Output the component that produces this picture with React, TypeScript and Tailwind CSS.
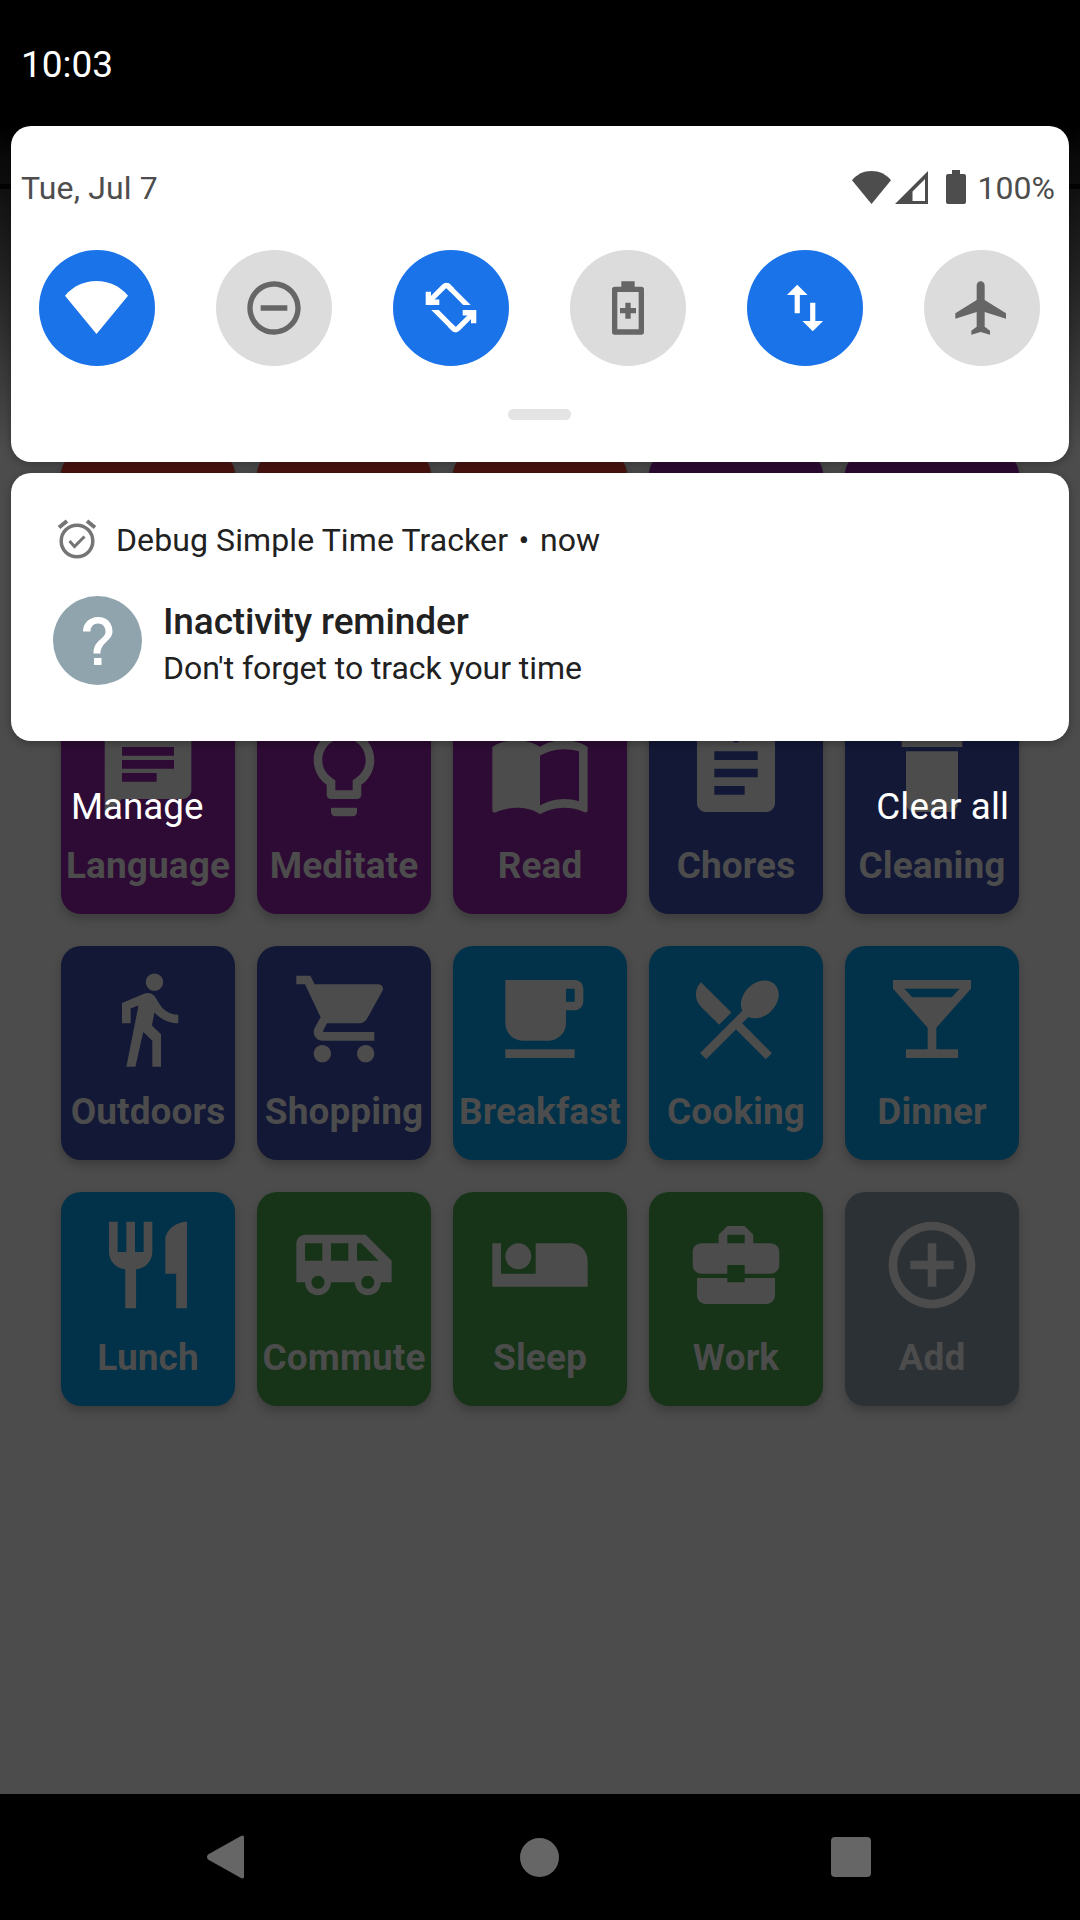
import React from "react";
import type { IconType } from "react-icons";
import {
  MdAddCircleOutline, MdAirlineSeatIndividualSuite, MdAirportShuttle, MdAssignment, MdBusinessCenter,
  MdChat, MdDelete, MdDirectionsWalk, MdFlight, MdFreeBreakfast, MdImportContacts, MdLightbulbOutline,
  MdLocalBar, MdRemoveCircleOutline, MdRestaurant, MdRestaurantMenu, MdShoppingCart, MdSwapVert,
} from "react-icons/md";

type Tile = { label: string; color: string; Icon?: IconType };

const red = "bg-[#491410]";
const purple = "bg-[#2e0b34]";
const indigo = "bg-[#131836]";
const blue = "bg-[#013249]";
const green = "bg-[#173418]";

const tiles: Tile[] = [
  { label: "", color: red }, { label: "", color: red }, { label: "", color: red },
  { label: "", color: purple }, { label: "", color: purple },
  { label: "Language", color: purple, Icon: MdChat },
  { label: "Meditate", color: purple, Icon: MdLightbulbOutline },
  { label: "Read", color: purple, Icon: MdImportContacts },
  { label: "Chores", color: indigo, Icon: MdAssignment },
  { label: "Cleaning", color: indigo, Icon: MdDelete },
  { label: "Outdoors", color: indigo, Icon: MdDirectionsWalk },
  { label: "Shopping", color: indigo, Icon: MdShoppingCart },
  { label: "Breakfast", color: blue, Icon: MdFreeBreakfast },
  { label: "Cooking", color: blue, Icon: MdRestaurantMenu },
  { label: "Dinner", color: blue, Icon: MdLocalBar },
  { label: "Lunch", color: blue, Icon: MdRestaurant },
  { label: "Commute", color: green, Icon: MdAirportShuttle },
  { label: "Sleep", color: green, Icon: MdAirlineSeatIndividualSuite },
  { label: "Work", color: green, Icon: MdBusinessCenter },
  { label: "Add", color: "bg-[#2c3135]", Icon: MdAddCircleOutline },
];

function ActivityTile({ label, color, Icon }: Tile) {
  return (
    <div className={`flex h-[214px] flex-col items-center rounded-[20px] pt-[20.500px] shadow-[0_5px_10px_rgba(0,0,0,0.22)] ${color}`}>
      <div className="h-[105px]">{Icon && <Icon size={104} />}</div>
      <span className="mt-[18.500px] whitespace-nowrap text-[37px] leading-[43px] font-bold tracking-[0.1px]">{label}</span>
    </div>
  );
}

function WifiFull({ className }: { className: string }) {
  return (
    <svg viewBox="0 0 63 53" preserveAspectRatio="none" className={className} fill="currentColor">
      <path d="M0 14.7C8 5.200 19 0 31.500 0S55 5.200 63 14.700L31.500 53z" />
    </svg>
  );
}

function RotateIcon() {
  return (
    <svg viewBox="0 0 64 64" className="size-16" fill="currentColor">
      <path d="M9.500 26L24.900 10.600Q27.300 8.200 29.700 10.600L33 13.900" fill="none" stroke="currentColor" strokeWidth="5.300" />
      <path d="M29.700 6.900L51.700 29H44.200L25.900 10.600z" />
      <path d="M6.700 15.700H12V23.500H20.300V29H6.700z" />
      <path d="M54.500 37L39.100 52.400Q36.700 54.800 34.300 52.400L31 49.100" fill="none" stroke="currentColor" strokeWidth="5.300" />
      <path d="M34.300 56.100L12.300 34H19.800L38.100 52.400z" />
      <path d="M57.300 47.300H52V39.500H43.700V34H57.300z" />
    </svg>
  );
}

function BatterySaverIcon() {
  return (
    <svg viewBox="0 0 24 24" className="size-16" fill="currentColor" fillRule="evenodd">
      <path d="M17 4h-2.500V2h-5v2H7a1 1 0 0 0-1 1v16a1 1 0 0 0 1 1h10a1 1 0 0 0 1-1V5a1 1 0 0 0-1-1zm-1 16H8V6h8zM11 10h2v2h2v2h-2v2h-2v-2H9v-2h2z" />
    </svg>
  );
}

function Toggle({ on = false, children }: { on?: boolean; children: React.ReactNode }) {
  return (
    <div className={`flex size-[116px] items-center justify-center rounded-full pb-px ${on ? "bg-[#1a73e8] text-white" : "bg-[#dcdcdc] text-[#666666]"}`}>
      {children}
    </div>
  );
}

export default function App() {
  return (
    <div className="relative h-[1920px] w-[1080px] overflow-hidden bg-[#4c4c4c] font-['Roboto',sans-serif]">
      <main className="grid grid-cols-5 gap-x-[22px] gap-y-[32px] px-[61px] pt-[454px] text-[#4c4c4c]">
        {tiles.map((t, i) => <ActivityTile key={i} {...t} />)}
      </main>

      <div className="absolute inset-0 flex flex-col">
        <div className="absolute inset-x-0 top-0 h-[470px] bg-[linear-gradient(to_bottom,#000_0,#000_126px,rgba(0,0,0,0.86)_160px,rgba(0,0,0,0.82)_184px,#030303_184px,#030303_189px,rgba(0,0,0,0.78)_189px,rgba(0,0,0,0.5)_290px,transparent_450px)]" />
        <header className="relative flex h-[126px] items-center px-[21px] pt-[4px] text-[37px] text-white">10:03</header>

        <section className="relative mx-[11px] h-[336px] rounded-[20px] bg-white shadow-[0_2px_10px_rgba(0,0,0,0.3)]">
          <div className="flex items-center justify-between pt-[40px] pr-[14px] pl-[10px] text-[#4d4d4d]">
            <span className="text-[32px] leading-[44px] tracking-[0.15px]">Tue, Jul 7</span>
            <div className="flex items-center">
              <WifiFull className="-mt-[2px] h-[33px] w-[39px]" />
              <svg viewBox="0 0 33 33" className="-mt-px ml-1 size-[33px]" fill="currentColor" fillRule="evenodd">
                <path d="M33 0V33H0zM30 8L17.500 20.500V30H30z" />
              </svg>
              <svg viewBox="0 0 20 34" className="-mt-[2px] ml-[18px] h-[34px] w-5" fill="currentColor">
                <path d="M6 0h8v4h4q2 0 2 2v26q0 2-2 2H2q-2 0-2-2V6q0-2 2-2h4z" />
              </svg>
              <span className="ml-[12px] text-[32px] leading-[44px]">100%</span>
            </div>
          </div>
          <div className="mt-[40px] flex justify-between pr-[29px] pl-[28px]">
            <Toggle on><WifiFull className="-ml-[1px] h-[53px] w-[63px]" /></Toggle>
            <Toggle><MdRemoveCircleOutline size={64} /></Toggle>
            <Toggle on><RotateIcon /></Toggle>
            <Toggle><BatterySaverIcon /></Toggle>
            <Toggle on><MdSwapVert size={62} /></Toggle>
            <Toggle><MdFlight size={64} /></Toggle>
          </div>
          <div className="ml-[497px] mt-[43px] h-[11px] w-[63px] rounded-[5px] bg-[#e4e4e4]" />
        </section>

        <section className="relative mx-[11px] mt-[11px] h-[268px] rounded-[20px] bg-white px-[42px] pt-[45px] text-[#212121] shadow-[0_2px_10px_rgba(0,0,0,0.3)]">
          <div className="flex items-center">
            <svg viewBox="0 0 40 40" className="-mt-[2px] ml-[3.500px] size-[40px] text-[#757575]" fill="none" stroke="currentColor" strokeWidth="3.500">
              <circle cx="20" cy="22" r="15.800" />
              <path d="M2 8.500L10 2M30 2l8 6.500" strokeWidth="4" />
              <path d="M12.500 22l5 5.500 10-10" strokeWidth="3" />
            </svg>
            <div className="ml-[19.500px] flex text-[32px] leading-[44px] tracking-[0.1px]">
              <span>Debug Simple Time Tracker</span>
              <span className="mx-[10.500px]">•</span>
              <span>now</span>
            </div>
          </div>
          <div className="mt-[31px] flex">
            <div className="mt-[3px] flex size-[89px] items-center justify-center rounded-full bg-[#90a4ae] text-white">
              <svg viewBox="0 0 30 48" className="h-[48px] w-[30px]" fill="currentColor">
                <path d="M0 14.500C0 6.500 6 0 15 0s14.500 6 14.500 14.500c0 9-12 11-12 22h-7c0-14 12-14 12-22 0-4.500-3-8-7.500-8s-7.500 3.500-7.500 8zM11 41h7.500v7H11z" />
              </svg>
            </div>
            <div className="ml-[21px] flex flex-col pt-[4px]">
              <span className="text-[37px] leading-[50px] font-medium tracking-[-0.13px]">Inactivity reminder</span>
              <span className="-mt-[1px] text-[32px] leading-[44px] tracking-[-0.06px]">Don't forget to track your time</span>
            </div>
          </div>
        </section>

        <div className="relative flex justify-between px-[71px] pt-[44px] text-[36.75px] leading-[44px] text-white">
          <span>Manage</span>
          <span className="tracking-[0.1px]">Clear all</span>
        </div>

        <nav className="relative mt-auto flex h-[126px] items-center justify-between bg-black pr-[209px] pl-[207px] text-[#666666]">
          <svg viewBox="0 0 37 44" className="h-[44px] w-[37px]" fill="currentColor">
            <path d="M1 19.500L34 1Q37 -0.500 37 2.500V41.500Q37 44.500 34 43L1 24.500Q-1 22 1 19.500z" />
          </svg>
          <span className="ml-[4px] size-[39px] rounded-full bg-[#666666]" />
          <span className="size-[40px] rounded-[4px] bg-[#666666]" />
        </nav>
      </div>
    </div>
  );
}
